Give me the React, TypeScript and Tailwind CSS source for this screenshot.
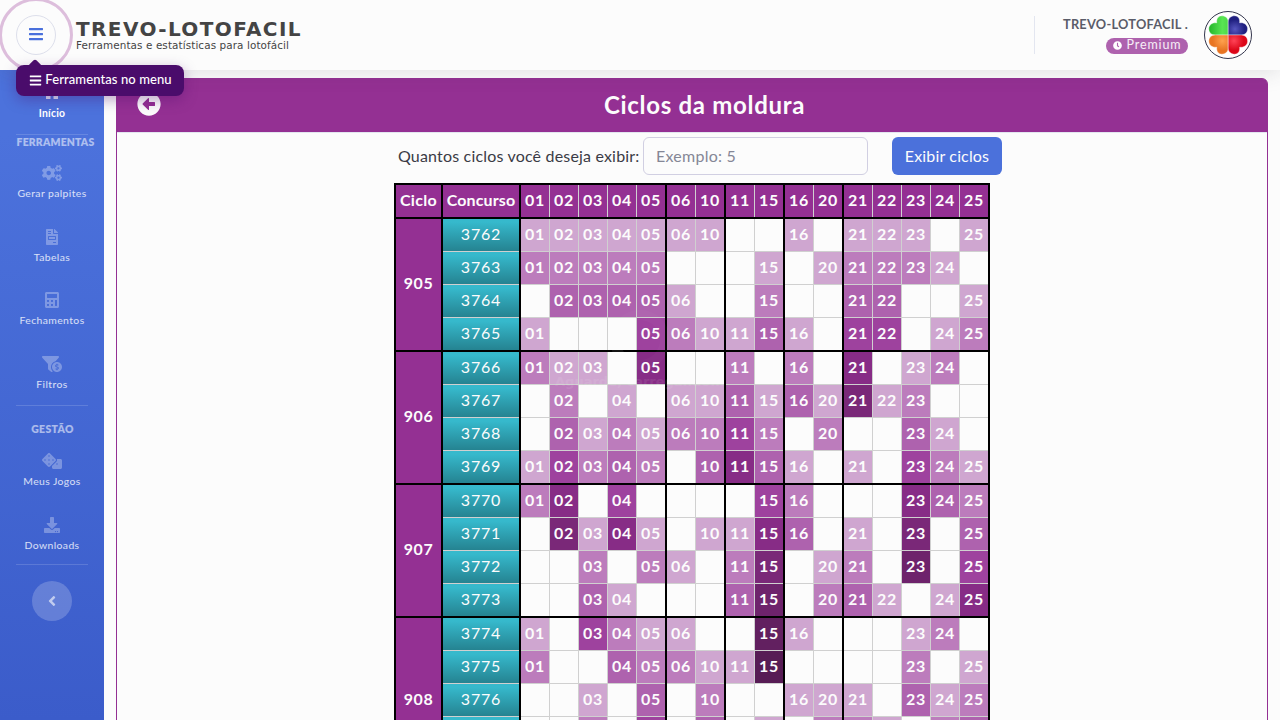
import React from "react";
import {
  FaArrowAltCircleLeft,
  FaAngleLeft,
  FaBars,
  FaCalculator,
  FaClock,
  FaCogs,
  FaDice,
  FaDownload,
  FaFileInvoice,
  FaFunnelDollar,
  FaHome,
} from "react-icons/fa";

const GROUPS: string[][] = [
  ["01", "02", "03", "04", "05"],
  ["06", "10"],
  ["11", "15"],
  ["16", "20"],
  ["21", "22", "23", "24", "25"],
];

const GROUP_COLS: Record<number, string> = {
  2: "grid-cols-[28px_28px]",
  5: "grid-cols-[28px_28px_28px_28px_28px]",
};

const DRAWS: [number, string][] = [
  [3762, "01 02 03 04 05 06 10 16 21 22 23 25"],
  [3763, "01 02 03 04 05 15 20 21 22 23 24"],
  [3764, "02 03 04 05 06 15 21 22 25"],
  [3765, "01 05 06 10 11 15 16 21 22 24 25"],
  [3766, "01 02 03 05 11 16 21 23 24"],
  [3767, "02 04 06 10 11 15 16 20 21 22 23"],
  [3768, "02 03 04 05 06 10 11 15 20 23 24"],
  [3769, "01 02 03 04 05 10 11 15 16 21 23 24 25"],
  [3770, "01 02 04 15 16 23 24 25"],
  [3771, "02 03 04 05 10 11 15 16 21 23 25"],
  [3772, "03 05 06 11 15 20 21 23 25"],
  [3773, "03 04 11 15 20 21 22 24 25"],
  [3774, "01 03 04 05 06 15 16 23 24"],
  [3775, "01 04 05 06 10 11 15 23 25"],
  [3776, "03 05 10 16 20 21 23 24 25"],
  [3777, "03 05 10 15 20 21 22 24 25"],
  [3778, "01 04 06 11 16 21 23 25"],
];

const CYCLES = [
  { id: 905, start: 0, count: 4 },
  { id: 906, start: 4, count: 4 },
  { id: 907, start: 8, count: 4 },
  { id: 908, start: 12, count: 5 },
];

// Cell shade by the number of consecutive draws in which the number came out.
const SHADES = [
  "bg-[#fcfcfc]",
  "bg-[#cfa6d0]",
  "bg-[#bc7cbc]",
  "bg-[#ae62ae]",
  "bg-[#9e429e]",
  "bg-[#872c86]",
  "bg-[#7a2878]",
  "bg-[#6e236c]",
  "bg-[#622060]",
  "bg-[#571c55]",
];

function streak(row: number, n: string): number {
  let count = 0;
  while (row - count >= 0 && DRAWS[row - count][1].split(" ").includes(n)) count++;
  return count;
}

function Cycle({ id, start, count }: { id: number; start: number; count: number }) {
  const rows = DRAWS.slice(start, start + count);
  return (
    <div className="flex gap-[2px]">
      <div className="flex w-[45px] items-center justify-center bg-[#943093] pb-[3px] font-bold tracking-[0.6px] text-[#fcfcfc]">{id}</div>
      <div className="flex w-[76px] flex-col gap-px bg-[#d0d0d0]">
        {rows.map(([n]) => (
          <div key={n} className="flex h-8 items-center justify-center bg-linear-to-b from-[#36b9cc] from-10% to-[#258391] pb-[2px] tracking-[0.8px] text-[#fcfcfc]">
            {n}
          </div>
        ))}
      </div>
      {GROUPS.map((group) => (
        <div key={group[0]} className={`grid auto-rows-[32px] gap-px bg-[#d0d0d0] ${GROUP_COLS[group.length]}`}>
          {rows.map((_, r) =>
            group.map((n) => {
              const level = streak(start + r, n);
              return (
                <div key={`${r}-${n}`} className={`flex items-center justify-center pb-[2px] font-bold tracking-[0.6px] text-[#fcfcfc] ${SHADES[level]}`}>
                  {level > 0 ? n : ""}
                </div>
              );
            })
          )}
        </div>
      ))}
    </div>
  );
}

function CyclesTable() {
  return (
    <div className="relative mt-2 flex w-[596px] flex-col gap-[2px] bg-black p-[2px] text-[16px] leading-6">
      <div className="flex h-8 gap-[2px] font-bold text-[#fcfcfc]">
        <div className="flex w-[45px] items-center justify-center bg-[#943093] pb-[2px] tracking-[0.3px]">Ciclo</div>
        <div className="flex w-[76px] items-center justify-center bg-[#943093] pb-[2px] tracking-[0.15px]">Concurso</div>
        {GROUPS.map((group) => (
          <div key={group[0]} className={`grid auto-rows-[32px] gap-px bg-[#d0d0d0] ${GROUP_COLS[group.length]}`}>
            {group.map((n) => (
              <div key={n} className="flex items-center justify-center bg-[#943093] pb-[2px] tracking-[0.6px]">{n}</div>
            ))}
          </div>
        ))}
      </div>
      {CYCLES.map((c) => (
        <Cycle key={c.id} {...c} />
      ))}
      <div className="pointer-events-none absolute top-[127px] left-[161px] flex w-[170px] flex-col items-center opacity-[0.08]">
        <div className="size-[60px] rounded-full border-[10px] border-white/30 border-l-white" />
        <div className="mt-1 font-['DejaVu_Sans',sans-serif] text-[13px] leading-4 font-bold whitespace-nowrap text-white">Aguarde, carregando...</div>
      </div>
    </div>
  );
}

function NavItem({ icon, label, className }: { icon: React.ReactNode; label: string; className: string }) {
  return (
    <a className={`flex flex-col items-center ${className}`}>
      <span className="flex h-4 items-center text-[16px] text-white/30">{icon}</span>
      <span className="mt-1 text-[10.4px] leading-4 tracking-[0.4px] whitespace-nowrap text-white/80">{label}</span>
    </a>
  );
}

function Sidebar() {
  return (
    <aside className="flex h-[650px] w-[104px] shrink-0 flex-col items-center bg-linear-to-b from-[#4c72dc] from-10% to-[#3b5cca]">
      <a className="mt-[14px] flex flex-col items-center text-white">
        <FaHome className="h-4 w-[18px] text-white/80" />
        <span className="mt-[5px] text-[10.4px] leading-4 font-bold tracking-[0.2px]">Início</span>
      </a>
      <div className="mt-[13px] h-px w-[72px] bg-white/15" />
      <div className="-mt-px pl-[7px] text-[10.4px] leading-4 font-extrabold tracking-[0.2px] text-white/55">FERRAMENTAS</div>
      <NavItem className="mt-[15px]" icon={<FaCogs className="h-4 w-5" />} label="Gerar palpites" />
      <NavItem className="mt-[28px]" icon={<FaFileInvoice />} label="Tabelas" />
      <NavItem className="mt-[27px]" icon={<FaCalculator />} label="Fechamentos" />
      <NavItem className="mt-[28px]" icon={<FaFunnelDollar className="h-4 w-5" />} label="Filtros" />
      <div className="mt-[13px] h-px w-[72px] bg-white/15" />
      <div className="mt-[15px] pl-px text-[10.4px] leading-4 font-extrabold tracking-[0.35px] text-white/55">GESTÃO</div>
      <NavItem className="mt-4" icon={<FaDice className="h-4 w-5" />} label="Meus Jogos" />
      <NavItem className="mt-[28px]" icon={<FaDownload />} label="Downloads" />
      <div className="mt-[11px] h-px w-[72px] bg-white/15" />
      <button className="mt-4 flex size-10 items-center justify-center rounded-full bg-white/20 text-white/60">
        <FaAngleLeft className="size-4" />
      </button>
    </aside>
  );
}

const LEAF = "M0 0V-13C0-17-3-19.2-6.3-19.2C-10-19.2-12-16-11.4-12.2C-16-12.8-19.4-10-19.4-6.2C-19.4-2.5-17-.2-13 0Z";

function Clover() {
  return (
    <svg viewBox="0 0 48 48" className="size-12">
      <defs>
        <linearGradient id="green"><stop offset="0" stopColor="#22b528" /><stop offset="0.7" stopColor="#59e553" /><stop offset="1" stopColor="#4cd848" /></linearGradient>
        <radialGradient id="blue" cx="0.65" cy="0.7"><stop offset="0" stopColor="#5656bf" /><stop offset="1" stopColor="#202080" /></radialGradient>
        <radialGradient id="red" cx="0.7" cy="0.7"><stop offset="0" stopColor="#ff4356" /><stop offset="1" stopColor="#dc0719" /></radialGradient>
        <radialGradient id="orange" cx="0.7" cy="0.7"><stop offset="0" stopColor="#ffa14e" /><stop offset="1" stopColor="#e87523" /></radialGradient>
      </defs>
      <circle cx="24" cy="24" r="23.5" fill="#fff" stroke="#34364d" />
      <g transform="translate(24.2 24)" stroke="#fff" strokeWidth="0.4">
        <path d={LEAF} fill="url(#green)" />
        <path d={LEAF} fill="url(#blue)" transform="scale(-1 1)" />
        <path d={LEAF} fill="url(#orange)" transform="scale(1 -1)" />
        <path d={LEAF} fill="url(#red)" transform="scale(-1 -1)" />
      </g>
    </svg>
  );
}

function Header() {
  return (
    <header className="relative z-10 flex h-[70px] items-center bg-[#fcfcfc] shadow-[0_2px_20px_rgba(58,59,69,0.15)]">
      <div className="relative ml-4 flex size-10 items-center justify-center rounded-full border border-[#dddfeb] pb-[2px] text-[#4a70dc]">
        <FaBars className="size-4" />
        <span className="absolute -top-[18px] -left-[18px] size-[74px] rounded-full border-[3px] border-[#943093]/30" />
        <div className="absolute top-[49px] -left-px flex h-[31px] w-[168px] items-center justify-center gap-[3px] rounded-lg bg-[#4a0c6b] pb-px pl-px text-[13px] text-white shadow-[0_4px_14px_rgba(74,12,107,0.35)]">
          <span className="absolute -top-[4px] left-[14px] size-[10px] rotate-45 rounded-[2px] bg-[#4a0c6b]" />
          <FaBars className="size-[13px]" />
          <span className="font-medium tracking-[0.09px] whitespace-nowrap">Ferramentas no menu</span>
        </div>
      </div>
      <div className="ml-5 font-['DejaVu_Sans',sans-serif] text-[#444]">
        <div className="text-[20px] leading-5 font-bold tracking-[1.4px]">TREVO-LOTOFACIL</div>
        <div className="text-[10.4px] leading-3 tracking-[0.1px]">Ferramentas e estatísticas para lotofácil</div>
      </div>
      <div className="ml-auto h-[38px] w-px bg-[#e3e6f0]" />
      <div className="flex w-[153px] flex-col items-end pb-[3px]">
        <div className="text-[12.8px] leading-5 font-bold tracking-[0.25px] whitespace-nowrap text-[#5a5c69]">TREVO-LOTOFACIL .</div>
        <div className="mt-[4px] flex h-4 w-[82px] items-center justify-center gap-[5px] rounded-full bg-[#ae62ae] text-[12.5px] leading-4 text-white/90">
          <FaClock className="size-[9px] text-white" />
          <span className="pb-px tracking-[0.85px]">Premium</span>
        </div>
      </div>
      <div className="mr-7 ml-4"><Clover /></div>
    </header>
  );
}

export default function App() {
  return (
    <div className="h-[720px] overflow-hidden bg-[#fcfcfc] font-['Lato',sans-serif]">
      <Header />
      <div className="flex">
        <Sidebar />
        <main className="h-[650px] flex-1 overflow-hidden px-3 pt-2">
          <section className="rounded-md border border-[#943093]">
            <div className="relative flex h-[53px] items-center justify-center rounded-t-[4px] bg-[#943093] pb-[2px] pl-[25px] text-[#fcfcfc]">
              <FaArrowAltCircleLeft className="absolute top-[13px] left-5 size-6" />
              <h1 className="text-[24px] leading-7 font-bold tracking-[0.7px]">Ciclos da moldura</h1>
            </div>
            <div className="flex flex-col items-center border-t border-[#e3e6f0] pt-1">
              <div className="ml-4 flex h-[38px] w-[604px] items-center text-[16px] text-[#3a3b45]">
                <label className="w-[245px] pb-px tracking-[0.18px] whitespace-nowrap">Quantos ciclos você deseja exibir:</label>
                <input placeholder="Exemplo: 5" className="h-[38px] w-[225px] rounded-md border border-[#d1cfe2] bg-[#fcfcfc] px-3 pb-[2px] tracking-[0.25px] placeholder:text-[#858796]" />
                <button className="ml-6 h-[38px] w-[110px] rounded-md bg-[#4b71db] pb-px tracking-[0.15px] whitespace-nowrap text-[#fcfcfc]">Exibir ciclos</button>
              </div>
              <CyclesTable />
            </div>
          </section>
        </main>
      </div>
    </div>
  );
}
